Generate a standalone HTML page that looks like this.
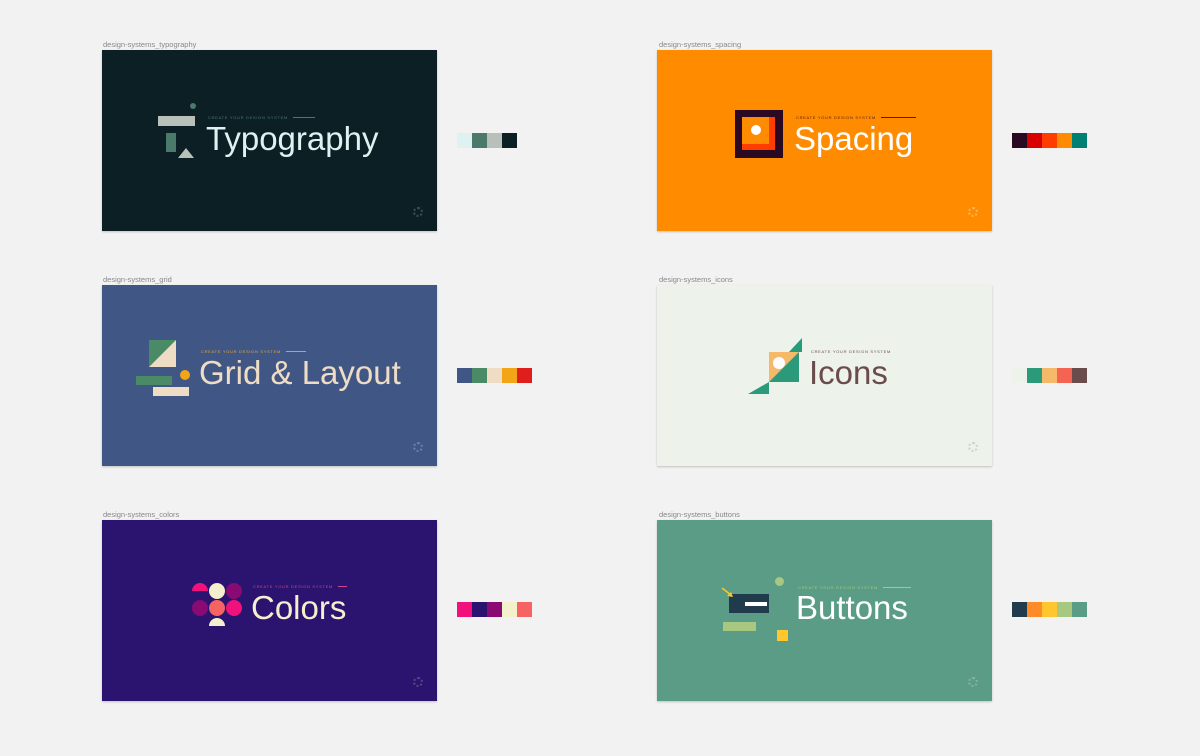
<!DOCTYPE html><html><head><style>
body{margin:0;width:1200px;height:756px;background:#f2f2f2;font-family:"Liberation Sans",sans-serif;position:relative;overflow:hidden}
.lbl{position:absolute;font-size:7.5px;color:#888}
.card{position:absolute;width:335px;height:181px;box-shadow:0 1px 2px rgba(0,0,0,.2);overflow:hidden}
.card>*{position:absolute}
.t{font-size:33px;line-height:40px;white-space:nowrap}
.cap{font-size:4px;letter-spacing:.7px;white-space:nowrap;display:flex;align-items:center;gap:5px}
.cap b{display:block;height:1px;font-weight:normal}
.sw{position:absolute;display:flex;height:15px}
.sw i{width:15px;height:15px;display:block}
.gear{width:10px;height:10px;border-radius:50%;border:2px dotted;opacity:.35;box-sizing:border-box}
</style></head><body>
<div class="lbl" style="left:103px;top:40px">design-systems_typography</div>
<div class="lbl" style="left:659px;top:40px">design-systems_spacing</div>
<div class="lbl" style="left:103px;top:275px">design-systems_grid</div>
<div class="lbl" style="left:659px;top:275px">design-systems_icons</div>
<div class="lbl" style="left:103px;top:510px">design-systems_colors</div>
<div class="lbl" style="left:659px;top:510px">design-systems_buttons</div>

<div class="card" style="left:102px;top:50px;background:#0b1f24">
<div style="left:56px;top:66px;width:37px;height:10px;background:#b9c0b9"></div>
<div style="left:64px;top:83px;width:10px;height:19px;background:#4b7a6b"></div>
<svg style="left:76px;top:98px" width="17" height="10"><polygon points="8,0 16,10 0,10" fill="#b9c0b9"/></svg>
<div style="left:88px;top:53px;width:6px;height:6px;border-radius:50%;background:#4b7a6b"></div>
<div class="cap" style="left:106px;top:65px;color:#4b7a6b">CREATE YOUR DESIGN SYSTEM<b style="width:22px;background:#4b7a6b"></b></div>
<div class="t" style="left:104px;top:69px;color:#dff2f2">Typography</div>
<div class="gear" style="left:311px;top:157px;border-color:#aaa"></div>
</div>
<div class="sw" style="left:457px;top:133px"><i style="background:#dff2f2"></i><i style="background:#4b7a6b"></i><i style="background:#b9c0b9"></i><i style="background:#0b1f24"></i></div>

<div class="card" style="left:657px;top:50px;background:#ff8c00">
<div style="left:78px;top:60px;width:48px;height:48px;background:#2a0a22"></div>
<div style="left:85px;top:67px;width:33px;height:33px;background:#ff3d00"></div>
<div style="left:85px;top:67px;width:27px;height:27px;background:#ff8c00"></div>
<div style="left:94px;top:75px;width:10px;height:10px;border-radius:50%;background:#fff"></div>
<div class="cap" style="left:139px;top:65px;color:#5a1a10">CREATE YOUR DESIGN SYSTEM<b style="width:35px;background:#5a1a10"></b></div>
<div class="t" style="left:137px;top:69px;color:#fff">Spacing</div>
<div class="gear" style="left:311px;top:157px;border-color:#fff"></div>
</div>
<div class="sw" style="left:1012px;top:133px"><i style="background:#2a0a22"></i><i style="background:#d80000"></i><i style="background:#ff3d00"></i><i style="background:#ff8c00"></i><i style="background:#008072"></i></div>

<div class="card" style="left:102px;top:285px;background:#405786">
<svg style="left:34px;top:55px" width="60" height="60"><polygon points="13,0 40,0 13,27" fill="#4b8a66"/><polygon points="40,0 40,27 13,27" fill="#eedcc5"/><rect x="0" y="36" width="36" height="9" fill="#4b8a66"/><rect x="17" y="47" width="36" height="9" fill="#eedcc5"/><circle cx="49" cy="35" r="5" fill="#f3a417"/></svg>
<div class="cap" style="left:99px;top:64px;color:#e8a92a">CREATE YOUR DESIGN SYSTEM<b style="width:20px;background:#9aa"></b></div>
<div class="t" style="left:97px;top:68px;color:#eedcc5">Grid &amp; Layout</div>
<div class="gear" style="left:311px;top:157px;border-color:#ccc"></div>
</div>
<div class="sw" style="left:457px;top:368px"><i style="background:#405786"></i><i style="background:#4b8a66"></i><i style="background:#eedcc5"></i><i style="background:#f3a417"></i><i style="background:#e01e1e"></i></div>

<div class="card" style="left:657px;top:285px;background:#edf2ea">
<svg style="left:90px;top:53px" width="56" height="56"><polygon points="55,0 55,14 42,14" fill="#2a9a7a"/><rect x="22" y="14" width="30" height="30" fill="#f6b96a"/><polygon points="52,14 52,44 22,44" fill="#2a9a7a"/><circle cx="32" cy="25" r="6" fill="#fff"/><polygon points="22,44 22,56 1,56" fill="#2a9a7a"/></svg>
<div class="cap" style="left:154px;top:64px;color:#6b4c4c">CREATE YOUR DESIGN SYSTEM</div>
<div class="t" style="left:152px;top:68px;color:#6b4c4c">Icons</div>
<div class="gear" style="left:311px;top:157px;border-color:#999"></div>
</div>
<div class="sw" style="left:1012px;top:368px"><i style="background:#edf2ea"></i><i style="background:#2a9a7a"></i><i style="background:#f6b96a"></i><i style="background:#f56353"></i><i style="background:#6b4c4c"></i></div>

<div class="card" style="left:102px;top:520px;background:#2a1470">
<svg style="left:90px;top:63px" width="52" height="46"><path d="M0,8 a8,8 0 0 1 16,0z" fill="#f0127a"/><circle cx="25" cy="8" r="8" fill="#f4efcc"/><circle cx="42" cy="8" r="8" fill="#8a0a74"/><circle cx="8" cy="25" r="8" fill="#8a0a74"/><circle cx="25" cy="25" r="8" fill="#f56363"/><circle cx="42" cy="25" r="8" fill="#f0127a"/><path d="M17,43 a8,8 0 0 1 16,0z" fill="#f4efcc"/></svg>
<div class="cap" style="left:151px;top:64px;color:#c94a8a">CREATE YOUR DESIGN SYSTEM<b style="width:9px;background:#c94a8a"></b></div>
<div class="t" style="left:149px;top:68px;color:#f4efcc">Colors</div>
<div class="gear" style="left:311px;top:157px;border-color:#aaa"></div>
</div>
<div class="sw" style="left:457px;top:602px"><i style="background:#f0127a"></i><i style="background:#2a1470"></i><i style="background:#8a0a74"></i><i style="background:#f4efcc"></i><i style="background:#f56363"></i></div>

<div class="card" style="left:657px;top:520px;background:#5a9c86">
<div style="left:118px;top:57px;width:9px;height:9px;border-radius:50%;background:#a8c882"></div>
<div style="left:72px;top:74px;width:40px;height:19px;background:#203c4c"></div>
<div style="left:88px;top:82px;width:22px;height:4px;background:#fff"></div>
<svg style="left:64px;top:67px" width="14" height="12"><line x1="1" y1="1" x2="10" y2="8" stroke="#ffc62e" stroke-width="1.5"/><polygon points="12,10 6,9 10,5" fill="#ffc62e"/></svg>
<div style="left:66px;top:102px;width:33px;height:9px;background:#a8c882"></div>
<div style="left:120px;top:110px;width:11px;height:11px;background:#ffc62e"></div>
<div class="cap" style="left:141px;top:65px;color:#a8c882">CREATE YOUR DESIGN SYSTEM<b style="width:28px;background:#a8c882"></b></div>
<div class="t" style="left:139px;top:68px;color:#fff">Buttons</div>
<div class="gear" style="left:311px;top:157px;border-color:#ddd"></div>
</div>
<div class="sw" style="left:1012px;top:602px"><i style="background:#203c4c"></i><i style="background:#ff8a2a"></i><i style="background:#ffc62e"></i><i style="background:#a8c882"></i><i style="background:#5a9c86"></i></div>
</body></html>
